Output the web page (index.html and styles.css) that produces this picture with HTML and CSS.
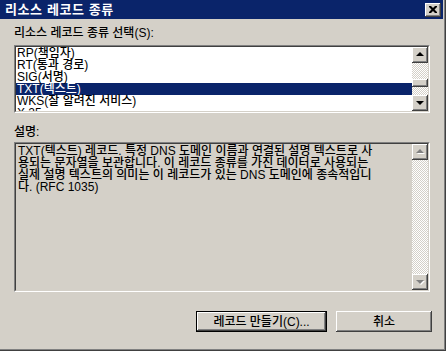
FILE: index.html
```html
<!DOCTYPE html>
<html lang="ko">
<head>
<meta charset="utf-8">
<link rel="stylesheet" href="styles.css">
</head>
<body>
<div class="window">
  <div class="titlebar">
    <span class="title">리소스 레코드 종류</span>
    <div class="close">
      <svg width="8" height="7" viewBox="0 0 8 7"><path d="M0 0h2l2 2 2-2h2v1l-2.5 2.5L8 6v1H6L4 5 2 7H0V6l2.5-2.5L0 1z" fill="#000"/></svg>
    </div>
  </div>
  <div class="content">
    <div class="lbl">리소스 레코드 종류 선택(<u>S</u>):</div>
    <div class="box listbox">
      <ul class="items">
        <li>RP(책임자)</li>
        <li>RT(통과 경로)</li>
        <li>SIG(서명)</li>
        <li class="sel">TXT(텍스트)</li>
        <li>WKS(잘 알려진 서비스)</li>
        <li>X.25</li>
      </ul>
      <div class="sbar">
        <div class="sbtn"><span class="arr up"></span></div>
        <div class="track track-top"></div>
        <div class="thumb"></div>
        <div class="track track-fill"></div>
        <div class="sbtn"><span class="arr down"></span></div>
      </div>
    </div>
    <div class="lbl desc-lbl">설명:</div>
    <div class="box descbox">
      <p class="desc">TXT(텍스트) 레코드. 특정 DNS 도메인 이름과 연결된 설명 텍스트로 사<br>용되는 문자열을 보관합니다. 이 레코드 종류를 가진 데이터로 사용되는<br>실제 설명 텍스트의 의미는 이 레코드가 있는 DNS 도메인에 종속적입니<br>다. (RFC 1035)</p>
      <div class="sbar">
        <div class="sbtn"><span class="arr up dis"></span></div>
        <div class="track track-fill"></div>
        <div class="sbtn"><span class="arr down dis"></span></div>
      </div>
    </div>
    <div class="buttons">
      <div class="btn default"><span class="btn-in">레코드 만들기(<u>C</u>)...</span></div>
      <div class="btn cancel"><span class="btn-in">취소</span></div>
    </div>
  </div>
</div>
</body>
</html>
```
FILE: styles.css
```css
* { box-sizing: border-box; }
html, body { margin: 0; padding: 0; }
body {
  background: #D4D0C8;
  overflow: hidden;
  font-family: "Liberation Sans", "Noto Sans CJK KR", sans-serif;
  font-size: 12px;
  font-weight: 500;
  color: #000;
}
.window {
  width: 446px;
  height: 351px;
  background: #D4D0C8;
  padding: 0 3px 3px 0;
  box-shadow: inset -1px -1px 0 #404040, inset -2px -2px 0 #808080;
  display: flex;
  flex-direction: column;
}
.titlebar {
  height: 19px;
  background: #0A246A;
  display: flex;
  align-items: center;
  justify-content: space-between;
  padding: 0 2px 0 5px;
}
.title {
  color: #fff;
  font-weight: bold;
  font-size: 13px;
  letter-spacing: 0.6px;
  line-height: 19px;
}
.close {
  width: 16px;
  height: 14px;
  background: #D4D0C8;
  box-shadow: inset -1px -1px 0 #404040, inset 1px 1px 0 #fff, inset -2px -2px 0 #808080;
  display: flex;
  align-items: center;
  justify-content: center;
  padding: 0 1px 1px 0;
}
.close svg { display: block; }
.content {
  flex: 1;
  display: flex;
  flex-direction: column;
  padding: 0 13px 0 14px;
}
.lbl {
  line-height: 14px;
  height: 14px;
  margin-top: 7px;
  white-space: nowrap;
}
.lbl u, .btn u { text-decoration: none; }
.box {
  display: flex;
  border: 1px solid;
  border-color: #808080 #fff #fff #808080;
}
.listbox {
  margin-top: 5px;
  height: 68px;
  background: #fff;
}
.items {
  list-style: none;
  margin: 0;
  padding: 0;
  flex: 1;
  border-top: 1px solid #404040;
  border-left: 1px solid #404040;
  border-bottom: 1px solid #D4D0C8;
  overflow: hidden;
}
.items li {
  height: 12px;
  line-height: 12px;
  padding-left: 1px;
  white-space: nowrap;
}
.items li.sel {
  background: #0A246A;
  color: #fff;
}
.sbar {
  width: 17px;
  display: flex;
  flex-direction: column;
  border-top: 1px solid #404040;
  border-bottom: 1px solid #D4D0C8;
  border-right: 1px solid #D4D0C8;
}
.sbtn {
  height: 16px;
  flex: none;
  background: #D4D0C8;
  box-shadow: inset -1px -1px 0 #404040, inset 1px 1px 0 #fff, inset -2px -2px 0 #808080;
  display: flex;
  align-items: center;
  justify-content: center;
  padding: 0 1px 1px 0;
}
.arr {
  width: 0;
  height: 0;
  border-left: 4px solid transparent;
  border-right: 4px solid transparent;
}
.arr.up { border-bottom: 4px solid #000; margin-top: -1px; }
.arr.down { border-top: 4px solid #000; }
.arr.up.dis { border-bottom-color: #808080; filter: drop-shadow(1px 1px 0 #fff); }
.arr.down.dis { border-top-color: #808080; filter: drop-shadow(1px 1px 0 #fff); }
.track {
  background: repeating-conic-gradient(#fff 0 25%, #D4D0C8 0 50%) 0 0 / 2px 2px;
}
.track-top { height: 16px; flex: none; }
.track-fill { flex: 1; }
.thumb {
  height: 8px;
  flex: none;
  background: #D4D0C8;
  box-shadow: inset -1px -1px 0 #404040, inset 1px 1px 0 #fff, inset -2px -2px 0 #808080;
}
.desc-lbl { margin-top: 12px; }
.descbox {
  margin-top: 3px;
  height: 150px;
  background: #D4D0C8;
}
.desc {
  flex: 1;
  margin: 0;
  padding: 1px 0 0 2px;
  line-height: 12px;
  white-space: nowrap;
  overflow: hidden;
  border-top: 1px solid #404040;
  border-left: 1px solid #404040;
  border-bottom: 1px solid #D4D0C8;
}
.buttons {
  display: flex;
  justify-content: flex-end;
  gap: 9px;
  margin-top: 19px;
  margin-right: -2px;
}
.btn {
  height: 21px;
  background: #D4D0C8;
  display: flex;
  align-items: center;
  justify-content: center;
  white-space: nowrap;
  box-shadow: inset -1px -1px 0 #404040, inset 1px 1px 0 #fff, inset -2px -2px 0 #808080;
}
.btn.default {
  width: 131px;
  border: 1px solid #000;
}
.btn.cancel { width: 96px; }
.btn-in { line-height: 14px; }
```
